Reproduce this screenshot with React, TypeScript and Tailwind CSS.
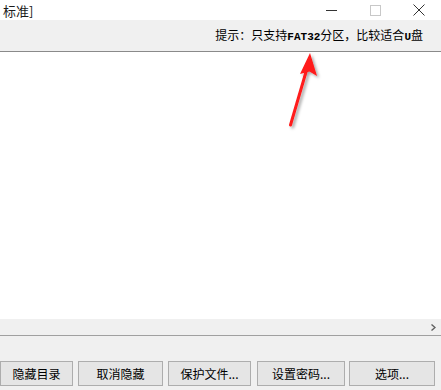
import React from 'react';

const font = { fontFamily: '"Noto Sans CJK SC", "Liberation Sans", sans-serif' };
const mono = { fontFamily: '"Liberation Mono", "DejaVu Sans Mono", monospace' };

const buttons = [
    { label: '隐藏目录', w: 'w-[73px]', ml: 'ml-0' },
    { label: '取消隐藏', w: 'w-[85px]', ml: 'ml-[5px]' },
    { label: '保护文件...', w: 'w-[83px]', ml: 'ml-[5px]' },
    { label: '设置密码...', w: 'w-[88px]', ml: 'ml-[6px]' },
    { label: '选项...', w: 'w-[86px]', ml: 'ml-[4px]' },
];

const TitleBar = () => (
    <div className="h-[20px] bg-white flex items-center justify-between">
        <div className="pl-[3px] text-[13px] leading-none text-[#1a1a1a]">标准]</div>
        <div className="flex items-center h-full">
            <div className="w-[44px] h-full flex items-center justify-center">
                <div className="w-[11px] h-px bg-[#333]" />
            </div>
            <div className="w-[44px] h-full flex items-center justify-center">
                <div className="w-[11px] h-[11px] border border-[#c8c8c8]" />
            </div>
            <div className="w-[44px] h-full flex items-center justify-center">
                <svg width="12" height="12" viewBox="0 0 12 12">
                    <path d="M0.5 0.5 L11.5 11.5 M11.5 0.5 L0.5 11.5" stroke="#333" strokeWidth="1" />
                </svg>
            </div>
        </div>
    </div>
);

const Arrow = () => (
    <svg className="absolute left-[280px] top-0" width="50" height="85" viewBox="0 0 50 85">
        <defs>
            <filter id="sh" x="-50%" y="-50%" width="200%" height="200%">
                <feDropShadow dx="2" dy="2" stdDeviation="1.5" floodColor="#000" floodOpacity="0.35" />
            </filter>
        </defs>
        <g filter="url(#sh)">
            <path d="M10.5 73 L26 20" stroke="#ff1a1a" strokeWidth="3" strokeLinecap="round" />
            <path d="M30 1 L37 24 L29.5 19.5 L20 22 Z" fill="#ff1a1a" />
        </g>
    </svg>
);

export default function App() {
    return (
        <div className="w-[441px] h-[390px] flex flex-col bg-[#f0f0f0] overflow-hidden" style={font}>
            <TitleBar />

            <div className="h-[32px] bg-[#f0f0f0] border-b border-[#8a8a8a] flex items-center justify-end pr-[18px]">
                <span className="text-[12px] leading-none text-black">
                    提示：只支持<span className="text-[11px] font-bold" style={mono}>FAT32</span>分区，比较适合
                    <span className="text-[11px] font-bold" style={mono}>U</span>盘
                </span>
            </div>

            <div className="relative h-[267px] bg-white">
                <Arrow />
            </div>

            <div className="h-[17px] bg-[#f0f0f0] border-b border-[#a0a0a0] flex items-center justify-end pr-[5px]">
                <svg width="5" height="7" viewBox="0 0 5 7">
                    <path d="M0.5 0.5 L4 3.5 L0.5 6.5" stroke="#606060" strokeWidth="1.4" fill="none" />
                </svg>
            </div>

            <div className="flex-1 flex items-start pt-[25px]">
                {buttons.map((b) => (
                    <div
                        key={b.label}
                        className={`${b.w} ${b.ml} h-[25px] shrink-0 flex items-center justify-center bg-[#e5e5e5] border border-[#adadad] text-[12px] text-black`}
                    >
                        {b.label}
                    </div>
                ))}
            </div>
        </div>
    );
}
